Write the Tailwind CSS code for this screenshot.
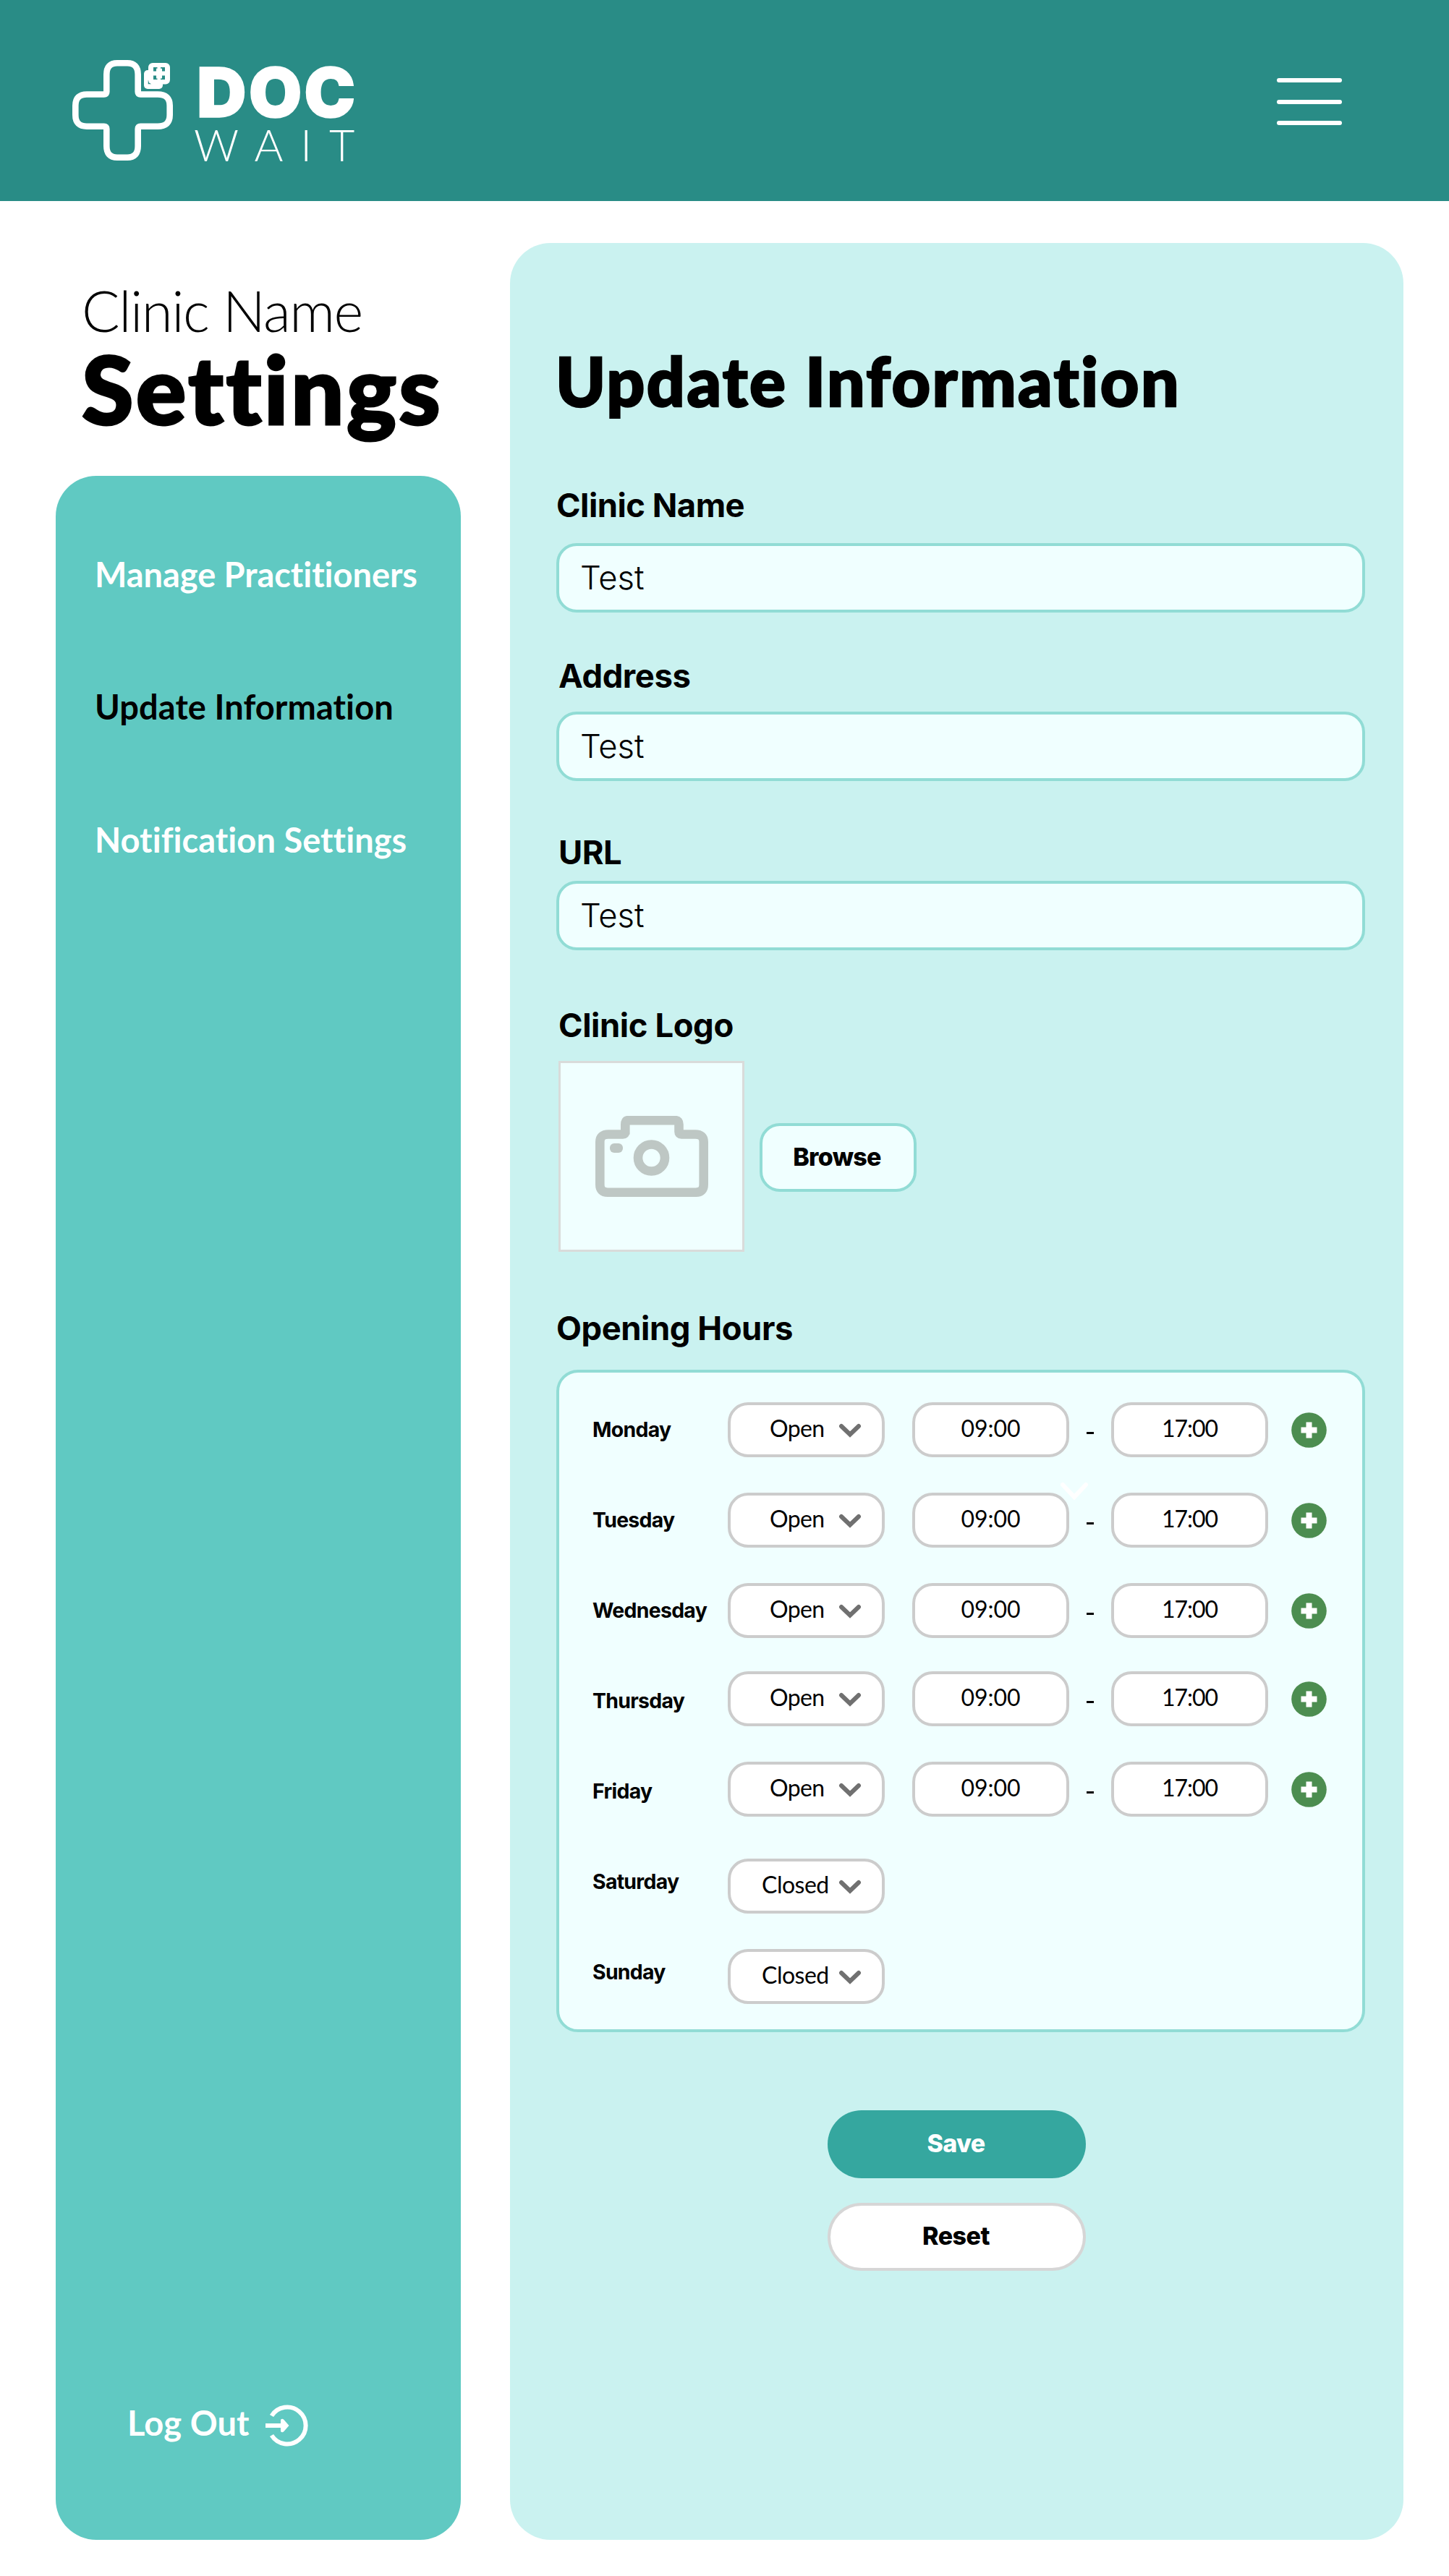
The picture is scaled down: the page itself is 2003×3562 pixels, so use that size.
<!DOCTYPE html>
<html lang="en">
<head>
<meta charset="utf-8">
<title>Doc Wait – Clinic Settings</title>
<script src="https://cdn.jsdelivr.net/npm/@tailwindcss/browser@4"></script>
</head>
<body class="w-[2003px] h-[3562px] bg-white text-black font-['Lato',sans-serif] flex flex-col overflow-hidden">

<header class="h-[278px] shrink-0 bg-[#298c86] text-white flex items-start justify-between pl-[100px] pr-[148px]">
  <div class="flex">
    <svg class="w-[140px] h-[140px] mt-[83px]" viewBox="0 0 140 140" fill="none">
      <path d="M62 4.3H76Q90.700 4.300 90.700 20V44Q90.700 47.500 94.200 47.500H118Q134.700 47.500 134.700 63V76Q134.700 91.700 118 91.700H94.200Q90.700 91.700 90.700 95.200V119Q90.700 134.700 76 134.700H62Q47.300 134.700 47.300 119V95.200Q47.300 91.700 43.800 91.700H20Q4.300 91.700 4.300 76V63Q4.300 47.500 20 47.500H43.800Q47.300 47.500 47.300 44V20Q47.300 4.300 62 4.300Z" stroke="#fff" stroke-width="8.600"/>
      <rect x="99" y="14" width="26" height="26" rx="5" fill="#fff"/>
      <path d="M105.500 28v4.500h3.500" stroke="#298c86" stroke-width="1.500"/>
      <rect x="105" y="4" width="30" height="29.500" rx="6" fill="#fff"/>
      <path d="M112 10h5.500v1.800h-1.500v3.700h-4zM122 10h6v5.500h-4v-3.700h-2zM112 21.500h4v4h1.500v1.500h-5.500zM124 21.500h4v5.500h-6v-1.500h2z" fill="#298c86"/>
    </svg>
    <div class="flex flex-col pt-[87.500px] pl-[32px]">
      <span class="font-['Inter',sans-serif] text-[95px] leading-[80px] font-black tracking-[3px] [-webkit-text-stroke:1.500px_#fff]">DOC</span>
      <span class="mt-[7px] -ml-[4px] text-[61px] leading-[50px] font-light tracking-[23.800px]">WAIT</span>
    </div>
  </div>
  <div class="w-[90px] mt-[108px] flex flex-col gap-[23.500px]">
    <i class="h-[6px] rounded-full bg-white"></i>
    <i class="h-[6px] rounded-full bg-white"></i>
    <i class="h-[6px] rounded-full bg-white"></i>
  </div>
</header>

<main class="flex-1 flex items-start pl-[77px]">
  <div class="w-[560px] shrink-0 flex flex-col">
    <h1 class="h-[380px] pl-[36px] pt-[104px] flex flex-col whitespace-nowrap">
      <span class="text-[78px] leading-[94px] font-light tracking-[-1.500px]">Clinic Name</span>
      <span class="-mt-[4px] text-[130px] leading-[130px] font-black tracking-[3.300px] [-webkit-text-stroke:3px_#000]">Settings</span>
    </h1>
    <nav class="h-[2854px] rounded-[56px] bg-[#60c9c2] text-white text-[47px] leading-[56px] font-bold flex flex-col pl-[54px] pt-[108px] whitespace-nowrap">
      <a class="tracking-[-0.050px]">Manage Practitioners</a>
      <a class="mt-[127px] text-black tracking-[0.100px]">Update Information</a>
      <a class="mt-[128px] tracking-[0.050px]">Notification Settings</a>
      <a class="mt-auto mb-[126px] ml-[45px] flex items-center">
        <span class="pb-[8px] tracking-[0.100px]">Log Out</span>
        <svg class="w-[60px] h-[60px] ml-[22px] text-white" viewBox="0 0 60 60" fill="none">
          <path d="M8.500 16.500A25.500 25.500 0 1 1 8.500 43.500" stroke="currentColor" stroke-width="6"/>
          <path d="M0 27h21v-5q2-2.500 4.500 0l7 8-7 8q-2.500 2.500-4.500 0v-5H0z" fill="currentColor"/>
        </svg>
      </a>
    </nav>
  </div>

  <section class="ml-[68px] mt-[58px] w-[1235px] h-[3176px] rounded-[56px] bg-[#caf2f0] px-[64px] pt-[140px] flex flex-col font-['Inter',sans-serif]">
    <h2 class="-ml-[1px] font-['Lato',sans-serif] text-[93px] leading-[100px] font-black tracking-[2.500px] whitespace-nowrap [-webkit-text-stroke:2.500px_#000]">Update Information</h2>

    <label class="mt-[95px] text-[45.400px] leading-[56px] font-bold tracking-[-0.500px]">Clinic Name</label>
    <div class="mt-[24px] w-[1118px] h-[96px] rounded-[28px] border-4 border-[#91dcd5] bg-[#f0ffff] flex items-center pl-[29px] text-[45.400px] font-light">Test</div>

    <label class="mt-[60px] pl-[3px] text-[45.400px] leading-[56px] font-bold tracking-[-0.400px]">Address</label>
    <div class="mt-[21px] w-[1118px] h-[96px] rounded-[28px] border-4 border-[#91dcd5] bg-[#f0ffff] flex items-center pl-[29px] text-[45.400px] font-light">Test</div>

    <label class="mt-[71px] pl-[3px] text-[45.400px] leading-[56px] font-bold tracking-[-0.500px]">URL</label>
    <div class="mt-[11px] w-[1118px] h-[96px] rounded-[28px] border-4 border-[#91dcd5] bg-[#f0ffff] flex items-center pl-[29px] text-[45.400px] font-light">Test</div>

    <label class="mt-[76px] pl-[3px] text-[45.400px] leading-[56px] font-bold tracking-[-0.400px]">Clinic Logo</label>
    <div class="mt-[21px] ml-[3px] flex items-start">
      <div class="w-[257px] h-[264px] border-[3px] border-[#d9dbda] bg-[#f0ffff] flex items-center justify-center">
        <svg class="w-[156px] h-[112px]" viewBox="0 0 156 112" fill="none">
          <path d="M41.300 25.500V12Q41.300 6.200 45 6.200H111Q115.500 6.200 115.500 12V22Q115.500 25.500 119 25.500H138Q149.700 25.500 149.700 36V95Q149.700 105.700 139 105.700H17Q6.300 105.700 6.300 95V36Q6.300 25.500 18 25.500H38Q41.300 25.500 41.300 22Z" stroke="#bec7c4" stroke-width="12.600"/>
          <circle cx="77.500" cy="58" r="18.500" stroke="#bec7c4" stroke-width="12.600"/>
          <rect x="20" y="38" width="18" height="13" rx="6" fill="#bec7c4"/>
        </svg>
      </div>
      <button class="ml-[21px] mt-[86px] w-[217px] h-[95px] rounded-[28px] border-4 border-[#91dcd5] bg-[#f0ffff] pb-[2px] pr-[3px] text-[34px] font-extrabold tracking-[-0.700px]">Browse</button>
    </div>

    <h3 class="mt-[78px] text-[45.400px] leading-[56px] font-bold tracking-[-0.450px]">Opening Hours</h3>
    <div id="hours" class="relative mt-[29px] w-[1118px] h-[916px] shrink-0 rounded-[30px] border-4 border-[#91dcd5] bg-[#f0ffff] pt-[41px] pl-[46px] flex flex-col">
      <svg class="absolute left-[692px] top-[151px] w-[40px] h-[26px]" viewBox="0 0 40 26" fill="none"><path d="M4 4l16 17L36 4" stroke="#fff" stroke-width="6" stroke-linecap="round"/></svg>
    </div>

    <button class="mt-[108px] self-center w-[357px] h-[94px] shrink-0 rounded-full bg-[#35a79f] text-white pb-[3px] pr-[2px] text-[34px] font-extrabold tracking-[-0.700px]">Save</button>
    <button class="mt-[34px] self-center w-[357px] h-[94px] shrink-0 rounded-full border-4 border-[#d6d6d6] bg-white pb-[3px] pr-[2px] text-[34px] font-extrabold tracking-[-0.500px]">Reset</button>
  </section>
</main>

<script>
// day, row spacing, label offset, open?
const days = [
  ['Monday', '', '', true],
  ['Tuesday', 'mt-[49px]', '', true],
  ['Wednesday', 'mt-[49px]', '', true],
  ['Thursday', 'mt-[46px]', 'pt-[6px]', true],
  ['Friday', 'mt-[49px]', 'pt-[6px]', true],
  ['Saturday', 'mt-[58px]', 'pb-[12px]', false],
  ['Sunday', 'mt-[49px]', 'pb-[12px]', false],
];
const pill = "w-[217px] h-[76px] rounded-[28px] border-4 border-[#ccc] bg-white flex items-center font-['Lato',sans-serif] text-[32px] leading-[40px] pb-[4px]";
const hours = document.getElementById('hours');
for (const [day, gap, shift, open] of days) {
  hours.insertAdjacentHTML('beforeend', `
  <div class="h-[76px] shrink-0 flex items-center ${gap}">
    <span class="w-[187px] text-[28.400px] leading-[40px] font-bold tracking-[-0.700px] ${shift}">${day}</span>
    <div class="relative ${pill} ${open ? 'pl-[54px] tracking-[-0.600px]' : 'pl-[43px] tracking-[-0.500px]'}">${open ? 'Open' : 'Closed'}
      <svg class="absolute left-[149px] top-[25px] w-[32px] h-[22px]" viewBox="0 0 32 22" fill="none"><path d="M4 4L16 15.500L28 4" stroke="#707070" stroke-width="6" stroke-linecap="round"/></svg>
    </div>
    ${open ? `
    <div class="ml-[38px] justify-center ${pill}">09:00</div>
    <div class="w-[58px] flex justify-center"><i class="mt-[8px] w-[10px] h-[3px] bg-black"></i></div>
    <div class="justify-center ${pill} tracking-[-1px]">17:00</div>
    <svg class="ml-[32px] w-[49px] h-[49px]" viewBox="0 0 49 49"><circle cx="24.500" cy="24.500" r="24.300" fill="#4c8d50"/><path d="M20.500 13.500h8v7h7v8h-7v7h-8v-7h-7v-8h7z" fill="#fff"/></svg>` : ''}
  </div>`);
}
</script>
</body>
</html>
